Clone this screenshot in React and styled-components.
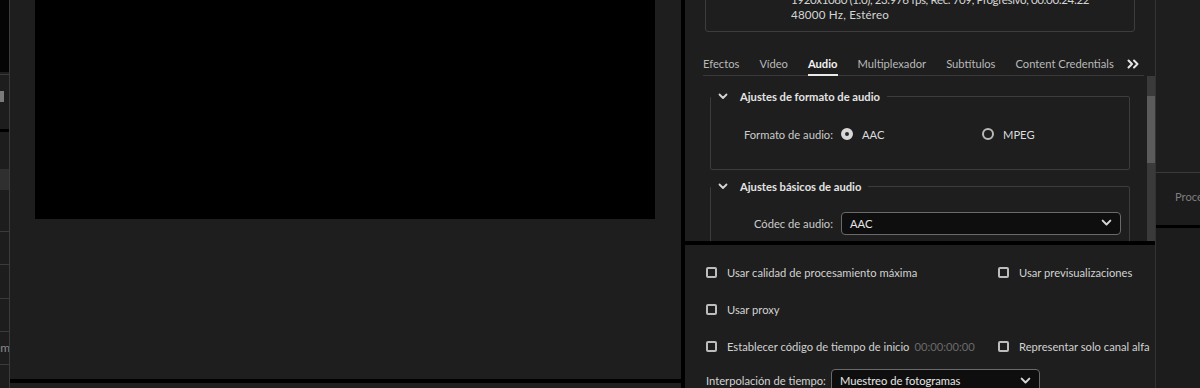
import React from 'react'
import styled, { createGlobalStyle, css } from 'styled-components'

const GlobalStyle = createGlobalStyle`
  html, body {
    margin: 0;
    padding: 0;
    background: #1d1d1d;
  }
  body {
    font-family: Lato, "Open Sans", sans-serif;
    font-size: 11.2px;
    color: #cfcfcf;
  }
`

const Chevron = ({ size = 10 }) => (
  <svg width={size} height={size * 0.7} viewBox="0 0 10 7" fill="none">
    <polyline points="1.5,1.5 5,5 8.5,1.5" stroke="#d6d6d6" strokeWidth="1.8" strokeLinecap="round" strokeLinejoin="round" />
  </svg>
)

const DoubleChevron = () => (
  <svg width="12" height="10" viewBox="0 0 12 10" fill="none">
    <polyline points="1.5,1.5 5,5 1.5,8.5" stroke="#e6e6e6" strokeWidth="2" strokeLinecap="round" strokeLinejoin="round" />
    <polyline points="7,1.5 10.5,5 7,8.5" stroke="#e6e6e6" strokeWidth="2" strokeLinecap="round" strokeLinejoin="round" />
  </svg>
)

const TABS = ['Efectos', 'Vídeo', 'Audio', 'Multiplexador', 'Subtítulos', 'Content Credentials']

function App() {
  return (
    <>
      <GlobalStyle />
      <Screen>
        <LeftStrip>
          <StripTop />
          <StripLine />
          <StripGap $h={16} />
          <StripIcon />
          <StripGap $h={27} />
          <StripBlack />
          <StripGap $h={37} />
          <StripRow />
          <StripGap $h={41} />
          <StripLine />
          <StripGap $h={32} />
          <StripLine />
          <StripGap $h={33} />
          <StripLine />
          <StripGap $h={32} />
          <StripLine />
          <StripText>em</StripText>
          <StripLine />
        </LeftStrip>

        <MonitorPanel>
          <Video />
          <PanelBar />
        </MonitorPanel>

        <VDivider />

        <ExportPanel>
          <SettingsArea>
            <InfoBox>
              <InfoLine $tight>1920x1080 (1.0), 23.976 fps, Rec. 709, Progresivo, 00:00:24:22</InfoLine>
              <InfoLine>48000 Hz, Estéreo</InfoLine>
            </InfoBox>
            <Tabs>
              {TABS.map(t => (
                <Tab key={t} $active={t === 'Audio'}>{t}</Tab>
              ))}
              <TabMore><DoubleChevron /></TabMore>
            </Tabs>
            <ScrollArea>
              <ScrollContent>
                <Group>
                  <Legend><Chevron /> Ajustes de formato de audio</Legend>
                  <FormRow $top={20} $bottom={24}>
                    <FieldLabel>Formato de audio:</FieldLabel>
                    <RadioOption>
                      <Radio $checked />
                      AAC
                    </RadioOption>
                    <RadioOption>
                      <Radio />
                      MPEG
                    </RadioOption>
                  </FormRow>
                </Group>
                <Group $gap>
                  <Legend><Chevron /> Ajustes básicos de audio</Legend>
                  <FormRow $top={19} $bottom={20}>
                    <FieldLabel>Códec de audio:</FieldLabel>
                    <Select $width={280}>
                      <span>AAC</span>
                      <Chevron size={11} />
                    </Select>
                  </FormRow>
                </Group>
              </ScrollContent>
              <Scrollbar>
                <Thumb />
              </Scrollbar>
            </ScrollArea>
          </SettingsArea>

          <HDivider />

          <Options>
            <OptionGrid>
              <Check><Box />Usar calidad de procesamiento máxima</Check>
              <Check><Box />Usar previsualizaciones</Check>
              <Check><Box />Usar proxy</Check>
              <span />
              <Check><Box />Establecer código de tiempo de inicio<Timecode>00:00:00:00</Timecode></Check>
              <Check><Box />Representar solo canal alfa</Check>
            </OptionGrid>
            <InterpRow>
              Interpolación de tiempo:
              <Select $width={209}>
                <span>Muestreo de fotogramas</span>
                <Chevron size={11} />
              </Select>
            </InterpRow>
          </Options>
        </ExportPanel>

        <QueuePanel>
          <QueueTop />
          <QueueHeader>Procesar</QueueHeader>
          <QueueBar />
        </QueuePanel>
      </Screen>
    </>
  )
}

const Screen = styled.div`
  display: flex;
  width: 1200px;
  height: 388px;
  overflow: hidden;
  background: #1d1d1d;
`

/* left edge of the project panel */
const LeftStrip = styled.div`
  width: 9px;
  flex: 0 0 9px;
  border-right: 1px solid #3b3b3b;
  display: flex;
  flex-direction: column;
  overflow: hidden;
`

const StripTop = styled.div`
  flex-shrink: 0;
  height: 72px;
  background: #050505;
  border-bottom: 2px solid #1f1f1f;
`

const StripLine = styled.div`
  flex-shrink: 0;
  height: 1px;
  background: #3a3a3a;
`

const StripGap = styled.div`
  flex-shrink: 0;
  height: ${p => p.$h}px;
`

const StripIcon = styled.div`
  flex-shrink: 0;
  width: 4px;
  height: 11px;
  background: #7a7a7a;
`

const StripBlack = styled.div`
  flex-shrink: 0;
  height: 3px;
  background: #000;
`

const StripRow = styled.div`
  flex-shrink: 0;
  height: 21px;
  background: #2f2f2f;
`

const StripText = styled.div`
  flex-shrink: 0;
  height: 32px;
  line-height: 32px;
  font-size: 12px;
  color: #8a8a8a;
  text-indent: -6px;
  white-space: nowrap;
`

const MonitorPanel = styled.div`
  width: 671px;
  flex: 0 0 671px;
  display: flex;
  flex-direction: column;
  background: #1e1e1e;
`

const Video = styled.div`
  margin-left: 25px;
  width: 620px;
  height: 219px;
  background: #000;
`

const PanelBar = styled.div`
  margin-top: auto;
  margin-bottom: 5px;
  height: 4px;
  background: #000;
`

const VDivider = styled.div`
  width: 4px;
  flex: 0 0 4px;
  background: #000;
`

const ExportPanel = styled.div`
  width: 470px;
  flex: 0 0 470px;
  display: flex;
  flex-direction: column;
  background: #1e1e1e;
  overflow: hidden;
`

const SettingsArea = styled.div`
  flex: 0 0 241px;
  height: 241px;
  display: flex;
  flex-direction: column;
  overflow: hidden;
`

const InfoBox = styled.div`
  flex-shrink: 0;
  margin: -26px 20px 20px 20px;
  padding: 17px 0 9px 85px;
  border: 1px solid #3d3d3d;
  border-radius: 3px;
`

const InfoLine = styled.div`
  line-height: 15px;
  font-size: 11.6px;
  letter-spacing: ${p => (p.$tight ? '-0.4px' : '0.2px')};
  color: #d4d4d4;
  white-space: nowrap;
  overflow: hidden;
`

const Tabs = styled.div`
  flex-shrink: 0;
  margin: 0 11px 0 18px;
  height: 23px;
  display: flex;
  align-items: center;
  gap: 20px;
  border-bottom: 1px solid #3a3a3a;
`

const Tab = styled.div`
  position: relative;
  height: 23px;
  line-height: 23px;
  color: #b9b9b9;
  white-space: nowrap;

  ${p => p.$active && css`
    color: #f2f2f2;
    font-weight: 700;

    &::after {
      content: '';
      position: absolute;
      left: 0;
      right: 0;
      bottom: -1px;
      height: 2px;
      background: #eaeaea;
    }
  `}
`

const TabMore = styled.div`
  display: flex;
  align-items: center;
  margin-left: -7px;
`

const ScrollArea = styled.div`
  flex: 1;
  display: flex;
  min-height: 0;
`

const ScrollContent = styled.div`
  flex: 1;
  padding-top: 13px;
  overflow: hidden;
`

const Scrollbar = styled.div`
  width: 8px;
  flex: 0 0 8px;
  background: #3a3a3a;
`

const Thumb = styled.div`
  margin-top: 20px;
  height: 67px;
  background: #5b5b5b;
`

const Group = styled.fieldset`
  margin: ${p => (p.$gap ? '9px' : '0')} 17px 0 25px;
  padding: 0;
  border: 1px solid #3c3c3c;
  border-radius: 2px;
  min-width: 0;
`

const Legend = styled.legend`
  display: flex;
  align-items: center;
  gap: 12px;
  padding: 0 7px 0 7px;
  height: 14px;
  font-weight: 700;
  color: #e4e4e4;
`

const FormRow = styled.div`
  display: flex;
  align-items: center;
  height: 22px;
  margin: ${p => p.$top}px 0 ${p => p.$bottom}px 0;
`

const FieldLabel = styled.div`
  width: 122px;
  flex: 0 0 122px;
  padding-right: 8px;
  text-align: right;
  color: #cbcbcb;
  white-space: nowrap;
`

const RadioOption = styled.label`
  width: 141px;
  display: flex;
  align-items: center;
  gap: 9px;
  color: #dcdcdc;
`

const Radio = styled.span`
  box-sizing: border-box;
  width: 12px;
  height: 12px;
  border-radius: 50%;
  border: ${p => (p.$checked ? '4px solid #d8d8d8' : '2px solid #b9b9b9')};
  background: ${p => (p.$checked ? '#2a2a2a' : 'transparent')};
`

const Select = styled.div`
  box-sizing: border-box;
  width: ${p => p.$width}px;
  height: 23px;
  flex-shrink: 0;
  display: flex;
  align-items: center;
  justify-content: space-between;
  padding: 0 8px 0 8px;
  background: #0e0e0e;
  border: 1px solid #6a6a6a;
  border-radius: 4px;
  color: #e6e6e6;
  white-space: nowrap;
`

const HDivider = styled.div`
  flex: 0 0 4px;
  background: #000;
`

const Options = styled.div`
  flex: 1;
  min-height: 0;
  padding: 17px 0 0 21px;
`

const OptionGrid = styled.div`
  display: grid;
  grid-template-columns: 292px 1fr;
  grid-auto-rows: 20px;
  row-gap: 17px;
`

const Check = styled.label`
  display: flex;
  align-items: center;
  color: #d2d2d2;
  white-space: nowrap;
`

const Box = styled.span`
  box-sizing: border-box;
  width: 11px;
  height: 11px;
  margin-right: 10px;
  border: 2px solid #bdbdbd;
  border-radius: 2px;
`

const Timecode = styled.span`
  margin-left: 5px;
  color: #6a6a6a;
`

const InterpRow = styled.div`
  margin-top: 13px;
  display: flex;
  align-items: center;
  gap: 5px;
  color: #d2d2d2;
  white-space: nowrap;
`

const QueuePanel = styled.div`
  flex: 1;
  display: flex;
  flex-direction: column;
  border-left: 1px solid #333;
  background: #1c1c1c;
  overflow: hidden;
`

const QueueTop = styled.div`
  flex-shrink: 0;
  height: 172px;
  background: #1e1e1e;
  border-bottom: 1px solid #3a3a3a;
`

const QueueHeader = styled.div`
  flex-shrink: 0;
  height: 52px;
  line-height: 48px;
  padding-left: 19px;
  color: #7e7e7e;
  white-space: nowrap;
`

const QueueBar = styled.div`
  flex-shrink: 0;
  height: 3px;
  background: #000;
`

export default App
